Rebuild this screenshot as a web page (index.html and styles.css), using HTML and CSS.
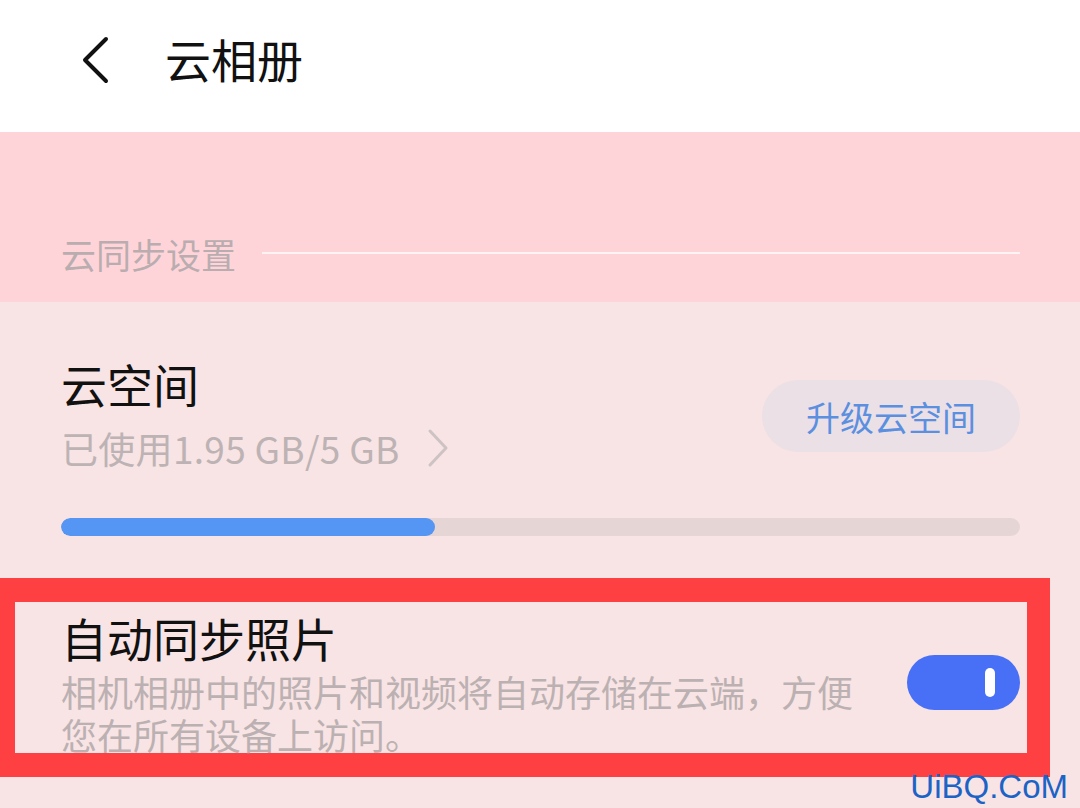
FILE: index.html
```html
<!DOCTYPE html>
<html lang="zh-CN">
<head>
    <meta charset="UTF-8">
    <meta name="viewport" content="width=device-width, initial-scale=1.0">
    <title>云相册</title>
    <link rel="stylesheet" href="styles.css">
</head>
<body>
    <header class="topbar">
        <svg class="back" width="34" height="50" viewBox="0 0 34 50">
            <path d="M28 4 L7 25 L28 46" fill="none" stroke="#111" stroke-width="4" stroke-linecap="round" stroke-linejoin="round"/>
        </svg>
        <h1 class="title">云相册</h1>
    </header>

    <section class="band">
        <span class="band-label">云同步设置</span>
        <span class="band-line"></span>
    </section>

    <section class="storage">
        <div class="storage-top">
            <div>
                <div class="item-title">云空间</div>
                <div class="usage">已使用1.95 GB/5 GB
                    <svg class="more" width="24" height="40" viewBox="0 0 24 40">
                        <path d="M4 3 L20 20 L4 37" fill="none" stroke="#cdc3c4" stroke-width="3" stroke-linecap="round" stroke-linejoin="round"/>
                    </svg>
                </div>
            </div>
            <button class="upgrade">升级云空间</button>
        </div>
        <div class="bar"><div class="bar-fill" style="width: 39%;"></div></div>
    </section>

    <section class="highlight">
        <div class="sync-row">
            <div class="sync-text">
                <div class="sync-title">自动同步照片</div>
                <p class="sync-desc">相机相册中的照片和视频将自动存储在云端，方便您在所有设备上访问。</p>
            </div>
            <div class="switch"><span class="knob"></span></div>
        </div>
    </section>

    <div class="watermark">UiBQ.CoM</div>
</body>
</html>
```

FILE: styles.css
```css
body {
    margin: 0;
    width: 1080px;
    height: 808px;
    overflow: hidden;
    position: relative;
    background-color: #f8e4e4;
    font-family: "Noto Sans CJK SC", "Noto Sans", sans-serif;
    color: #111;
}
.topbar {
    height: 132px;
    background-color: #fff;
    display: flex;
    align-items: center;
    padding-left: 78px;
    box-sizing: border-box;
}
.back {
    display: block;
    margin-top: -12px;
}
.title {
    margin: -16px 0 0 53px;
    font-size: 46px;
    font-weight: 400;
    line-height: 60px;
}
.band {
    height: 170px;
    background-color: #ffd4d9;
    display: flex;
    align-items: center;
    padding: 74px 60px 0 61px;
    box-sizing: border-box;
}
.band-label {
    font-size: 35px;
    line-height: 48px;
    color: #b9adb0;
}
.band-line {
    flex: 1;
    height: 2px;
    margin-left: 26px;
    margin-top: -2px;
    background-color: #fff3f4;
}
.storage {
    padding: 50px 60px 0 61px;
}
.storage-top {
    display: flex;
    justify-content: space-between;
    align-items: center;
}
.item-title {
    font-size: 46px;
    line-height: 62px;
}
.usage {
    display: flex;
    align-items: center;
    margin-top: 6px;
    font-size: 37px;
    line-height: 56px;
    letter-spacing: 0.3px;
    color: #bdb3b4;
}
.more {
    margin-left: 26px;
}
.upgrade {
    width: 258px;
    height: 72px;
    border: none;
    border-radius: 36px;
    background-color: #ebe0e6;
    color: #5b8fe0;
    font-family: inherit;
    font-size: 34px;
    padding: 0;
    margin-top: 4px;
}
.bar {
    margin-top: 42px;
    height: 18px;
    border-radius: 9px;
    background-color: #e6d5d5;
    overflow: hidden;
}
.bar-fill {
    height: 100%;
    border-radius: 9px;
    background-color: #5596f4;
}
.highlight {
    width: 1050px;
    margin-top: 42px;
    box-sizing: border-box;
    border-style: solid;
    border-color: #fe4042;
    border-width: 24px 23px 24px 15px;
}
.sync-row {
    height: 151px;
    display: flex;
    align-items: center;
    padding: 0 7px 0 46px;
}
.sync-text {
    flex: 1;
    align-self: flex-start;
    padding-top: 8px;
}
.sync-title {
    font-size: 46px;
    line-height: 54px;
}
.sync-desc {
    width: 800px;
    margin: 6px 0 0;
    font-size: 36px;
    line-height: 43px;
    color: #bcb1b2;
}
.switch {
    width: 113px;
    height: 55px;
    border-radius: 28px;
    background-color: #4870f6;
    display: flex;
    align-items: center;
    justify-content: flex-end;
    padding-right: 25px;
    box-sizing: border-box;
    margin-top: 10px;
}
.knob {
    width: 10px;
    height: 29px;
    border-radius: 5px;
    background-color: #fff;
}
.watermark {
    position: absolute;
    right: 12px;
    bottom: 6px;
    font-family: "Liberation Sans", Arial, sans-serif;
    font-size: 33px;
    line-height: 30px;
    color: #1b63c6;
}
```
